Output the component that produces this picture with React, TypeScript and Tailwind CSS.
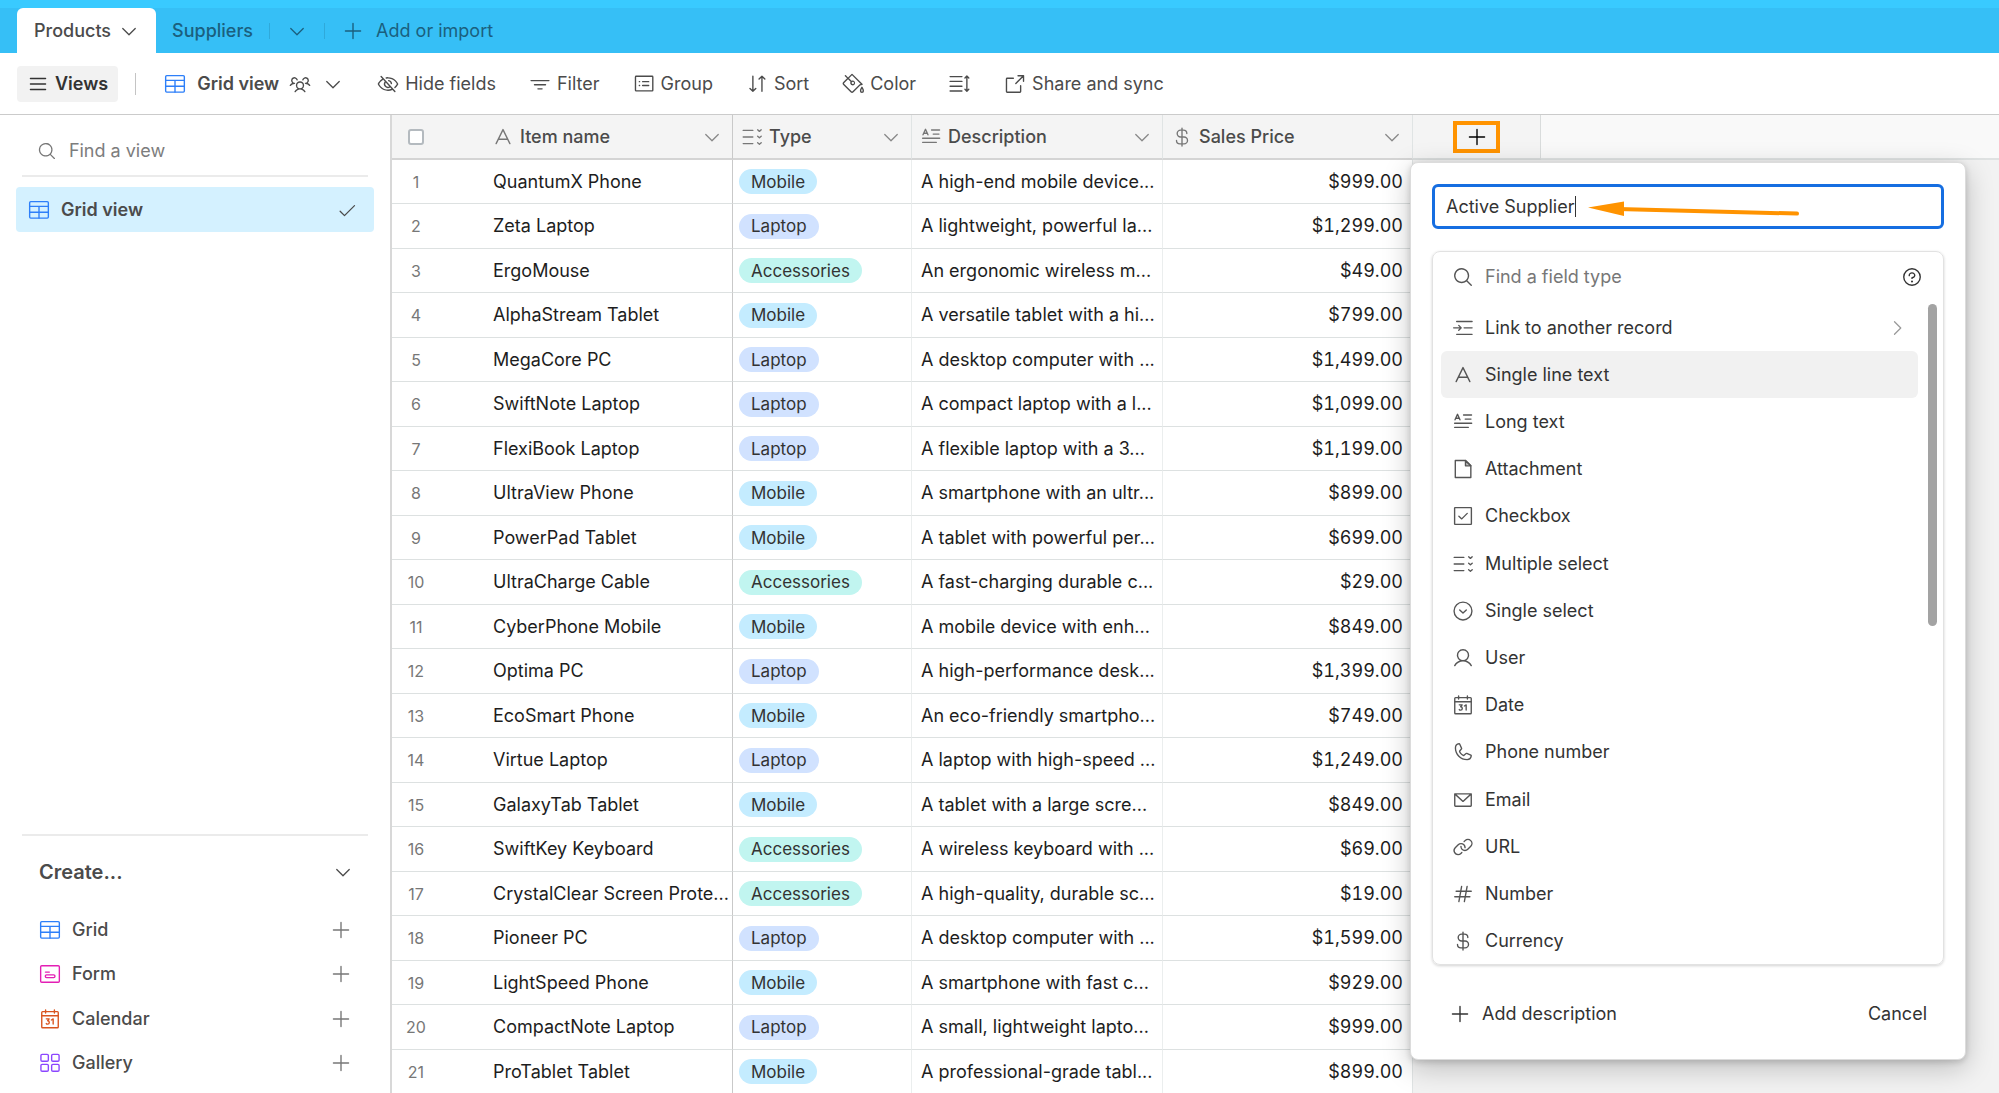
import React, { useState } from "react";
import {
  PiCaretDown,
  PiCaretRight,
  PiCheck,
  PiCurrencyDollar,
  PiEnvelopeSimple,
  PiEyeSlash,
  PiFunnelSimple,
  PiHash,
  PiLink,
  PiList,
  PiMagnifyingGlass,
  PiPaintBucket,
  PiPhone,
  PiPlus,
  PiQuestion,
  PiUser,
  PiUsersThree,
} from "react-icons/pi";

interface iconProps {
  className?: string;
}

interface svgProps extends iconProps {
  children: React.ReactNode;
}

// every hand drawn icon sits on a 16 unit grid
const Svg = ({ className = "", children }: svgProps) => (
  <svg
    viewBox="0 0 16 16"
    className={`size-[22px] shrink-0 ${className}`}
    fill="none"
    stroke="currentColor"
    strokeWidth="1"
    strokeLinecap="round"
    strokeLinejoin="round"
    aria-hidden="true"
  >
    {children}
  </svg>
);

const GridIcon = ({ className }: iconProps) => (
  <Svg className={className}>
    <rect x="1.2" y="1.9" width="13.6" height="12" rx="0.8" />
    <path d="M1.2 5.4h13.6M1.2 9.6h13.6M8 5.4v8.5" />
  </Svg>
);

const FormIcon = ({ className }: iconProps) => (
  <Svg className={className}>
    <rect x="1.2" y="2" width="13.6" height="12" rx="0.8" />
    <path d="M4.7 6.6h2.8" />
    <rect x="4.6" y="8.6" width="7" height="2" rx="0.9" />
  </Svg>
);

const CalendarIcon = ({ className }: iconProps) => (
  <Svg className={className}>
    <rect x="2" y="2.6" width="12" height="11.8" rx="0.6" />
    <path d="M2 5.6h12M4.8 1.4v2.2M11.2 1.4v2.2" />
    <path d="M5.3 7.9h2.1L6.3 9.3c1.8.2 1.4 2.5-.1 2.4-.4 0-.7-.1-.9-.4M9 8.7l1.3-.8v3.8" />
  </Svg>
);

const GalleryIcon = ({ className }: iconProps) => (
  <Svg className={className}>
    <rect x="1.4" y="1.7" width="5.4" height="5" rx="0.9" />
    <rect x="9.2" y="1.7" width="5.4" height="5" rx="0.9" />
    <rect x="1.4" y="9" width="5.4" height="5" rx="0.9" />
    <rect x="9.2" y="9" width="5.4" height="5" rx="0.9" />
  </Svg>
);

const GroupIcon = ({ className }: iconProps) => (
  <Svg className={className}>
    <rect x="1.8" y="2.4" width="12.6" height="10.6" rx="0.5" />
    <path d="M4.6 6.3h.2M4.6 9.1h.2M7 6.3h4.4M7 9.1h4.4" />
  </Svg>
);

const SortIcon = ({ className }: iconProps) => (
  <Svg className={className}>
    <path d="M5 2.3v11M2.9 11.2L5 13.3l2.1-2.1M11.6 13.3v-11M9.5 4.4l2.1-2.1 2.1 2.1" />
  </Svg>
);

const RowHeightIcon = ({ className }: iconProps) => (
  <Svg className={className}>
    <path d="M.8 2.6h8.6M.8 6.1h8.6M.8 9.6h8.6M.8 13.1h8.6M13 2.2v11M11.6 3.6L13 2.2l1.4 1.4M11.6 11.8l1.4 1.4 1.4-1.4" />
  </Svg>
);

const ShareIcon = ({ className }: iconProps) => (
  <Svg className={className}>
    <path d="M6.8 3.8H2.3a.5.5 0 0 0-.5.5v9.2c0 .3.2.5.5.5h9.3c.3 0 .5-.2.5-.5V9.2M10.2 2h4v4M14.2 2L8.6 7.6" />
  </Svg>
);

const TextIcon = ({ className }: iconProps) => (
  <Svg className={className}>
    <path d="M3 12.8L8 2.6l5 10.2M4.7 9.6h6.6" />
  </Svg>
);

const LongTextIcon = ({ className }: iconProps) => (
  <Svg className={className}>
    <path d="M2.2 6.4l1.8-4 1.8 4M2.8 5.3h2.4M8.4 2.9h5.8M9.6 5.9h4.2M1.9 8.9h12.4M1.9 11.9h10" />
  </Svg>
);

const MultiSelectIcon = ({ className }: iconProps) => (
  <Svg className={className}>
    <path d="M1.6 3.2h7M1.6 8h7M1.6 12.8h7M12.1 2.8l1.3 1.1 1.3-1.1M12.1 7.5l1.3 1.1 1.3-1.1M12.1 12.2l1.3 1.1 1.3-1.1" />
  </Svg>
);

const LinkRecordIcon = ({ className }: iconProps) => (
  <Svg className={className}>
    <path d="M3.4 3.3h11.2M8.8 7.9h5.8M3.4 12.6h11.2M1.2 7.9h5.4M4.9 6.1l1.8 1.8-1.8 1.8" />
  </Svg>
);

const FileIcon = ({ className }: iconProps) => (
  <Svg className={className}>
    <path d="M2.4 1.8h7.4l3.9 3.9v8.5H2.4z" />
    <path d="M9.8 1.8v3.9h3.9z" fill="currentColor" fillOpacity="0.4" />
  </Svg>
);

const CheckboxIcon = ({ className }: iconProps) => (
  <Svg className={className}>
    <rect x="1.9" y="1.9" width="12.2" height="12.2" rx="0.3" />
    <path d="M5 8.2l2.1 1.9 4-4" />
  </Svg>
);

const SingleSelectIcon = ({ className }: iconProps) => (
  <Svg className={className}>
    <circle cx="8" cy="8" r="6.5" />
    <path d="M5.6 7.2L8 9.5l2.4-2.3" />
  </Svg>
);

const rows: [string, string, string, string][] = [
  ["QuantumX Phone", "Mobile", "A high-end mobile device...", "$999.00"],
  ["Zeta Laptop", "Laptop", "A lightweight, powerful la...", "$1,299.00"],
  ["ErgoMouse", "Accessories", "An ergonomic wireless m...", "$49.00"],
  ["AlphaStream Tablet", "Mobile", "A versatile tablet with a hi...", "$799.00"],
  ["MegaCore PC", "Laptop", "A desktop computer with ...", "$1,499.00"],
  ["SwiftNote Laptop", "Laptop", "A compact laptop with a l...", "$1,099.00"],
  ["FlexiBook Laptop", "Laptop", "A flexible laptop with a 3...", "$1,199.00"],
  ["UltraView Phone", "Mobile", "A smartphone with an ultr...", "$899.00"],
  ["PowerPad Tablet", "Mobile", "A tablet with powerful per...", "$699.00"],
  ["UltraCharge Cable", "Accessories", "A fast-charging durable c...", "$29.00"],
  ["CyberPhone Mobile", "Mobile", "A mobile device with enh...", "$849.00"],
  ["Optima PC", "Laptop", "A high-performance desk...", "$1,399.00"],
  ["EcoSmart Phone", "Mobile", "An eco-friendly smartpho...", "$749.00"],
  ["Virtue Laptop", "Laptop", "A laptop with high-speed ...", "$1,249.00"],
  ["GalaxyTab Tablet", "Mobile", "A tablet with a large scre...", "$849.00"],
  ["SwiftKey Keyboard", "Accessories", "A wireless keyboard with ...", "$69.00"],
  ["CrystalClear Screen Prote...", "Accessories", "A high-quality, durable sc...", "$19.00"],
  ["Pioneer PC", "Laptop", "A desktop computer with ...", "$1,599.00"],
  ["LightSpeed Phone", "Mobile", "A smartphone with fast c...", "$929.00"],
  ["CompactNote Laptop", "Laptop", "A small, lightweight lapto...", "$999.00"],
  ["ProTablet Tablet", "Mobile", "A professional-grade tabl...", "$899.00"],
];

const tagColors: Record<string, string> = {
  Mobile: "bg-[#c4ecff]",
  Laptop: "bg-[#d1e2ff]",
  Accessories: "bg-[#c1f5f0]",
};

const columns = [
  { label: "Item name", Icon: TextIcon, className: "w-[293px] pl-[52px] border-[#c9c9c9]" },
  { label: "Type", Icon: MultiSelectIcon, className: "w-[179px] pl-2 border-[#e0e4e4]" },
  { label: "Description", Icon: LongTextIcon, className: "w-[251px] pl-2 border-[#e0e4e4]" },
  { label: "Sales Price", Icon: PiCurrencyDollar, className: "w-[250px] pl-2 border-[#e0e4e4]" },
];

const fieldTypes = [
  { label: "Link to another record", Icon: LinkRecordIcon },
  { label: "Single line text", Icon: TextIcon },
  { label: "Long text", Icon: LongTextIcon },
  { label: "Attachment", Icon: FileIcon },
  { label: "Checkbox", Icon: CheckboxIcon },
  { label: "Multiple select", Icon: MultiSelectIcon },
  { label: "Single select", Icon: SingleSelectIcon },
  { label: "User", Icon: PiUser },
  { label: "Date", Icon: CalendarIcon },
  { label: "Phone number", Icon: PiPhone },
  { label: "Email", Icon: PiEnvelopeSimple },
  { label: "URL", Icon: PiLink },
  { label: "Number", Icon: PiHash },
  { label: "Currency", Icon: PiCurrencyDollar },
];

const createItems = [
  { label: "Grid", Icon: GridIcon, color: "text-[#2d7ff9]" },
  { label: "Form", Icon: FormIcon, color: "text-[#e31fb4]" },
  { label: "Calendar", Icon: CalendarIcon, color: "text-[#d9541e]" },
  { label: "Gallery", Icon: GalleryIcon, color: "text-[#8b46ff]" },
];

const toolbarItems = [
  { label: "Hide fields", Icon: PiEyeSlash },
  { label: "Filter", Icon: PiFunnelSimple },
  { label: "Group", Icon: GroupIcon },
  { label: "Sort", Icon: SortIcon },
  { label: "Color", Icon: PiPaintBucket },
  { label: "", Icon: RowHeightIcon },
  { label: "Share and sync", Icon: ShareIcon },
];

const TopTabs = () => (
  <nav className="flex h-[53px] shrink-0 items-end border-t-8 border-[#39caff] bg-[#36bff6] pl-[17px] text-[#1b5f7e]">
    <button
      type="button"
      className="flex h-[45px] items-center gap-2 rounded-t-md bg-white px-[17px] font-medium text-[#4b4b4b]"
    >
      Products
      <PiCaretDown className="size-5" />
    </button>
    <div className="flex h-[45px] items-center">
      <button type="button" className="px-4 font-medium">
        Suppliers
      </button>
      <span className="h-4 w-px bg-[#2fa9da]" />
      <button type="button" aria-label="All tables" className="px-[17px]">
        <PiCaretDown className="size-5" />
      </button>
      <span className="h-4 w-px bg-[#2fa9da]" />
      <button type="button" className="flex items-center gap-3 px-[17px]">
        <PiPlus className="size-[22px]" />
        Add or import
      </button>
    </div>
  </nav>
);

const Toolbar = () => (
  <div className="flex h-[62px] shrink-0 items-center border-b border-[#cbcbcb] bg-white px-[17px] text-[#4b4b4b]">
    <button
      type="button"
      className="flex h-9 items-center gap-1.5 rounded bg-[#f2f2f2] px-2.5 font-semibold text-[#333]"
    >
      <PiList className="size-[22px]" />
      Views
    </button>
    <span className="ml-[17px] h-[22px] w-px bg-[#c4c4c4]" />
    <button type="button" className="ml-7 flex items-center font-semibold">
      <GridIcon className="text-[#2d7ff9]" />
      <span className="ml-[11px]">Grid view</span>
      <PiUsersThree className="ml-2.5 size-[22px]" />
      <PiCaretDown className="ml-3 size-5" />
    </button>
    <div className="ml-[34px] flex items-center gap-[33px]">
      {toolbarItems.map(({ label, Icon }) => (
        <button
          key={label || "Row height"}
          type="button"
          aria-label={label || "Row height"}
          className="flex items-center gap-1.5"
        >
          <Icon className="size-[22px]" />
          {label}
        </button>
      ))}
    </div>
  </div>
);

const Sidebar = () => (
  <aside className="flex w-[392px] shrink-0 flex-col border-r-2 border-[#d8d8d8] bg-white text-[#4b4b4b]">
    <label className="mx-[22px] flex h-[62px] items-center gap-3 border-b-2 border-[#ebebeb] pt-3 pl-[15px]">
      <PiMagnifyingGlass className="size-[22px] text-[#777]" />
      <input
        type="text"
        aria-label="Find a view"
        placeholder="Find a view"
        className="w-full outline-none placeholder:text-[#7d7d7d]"
      />
    </label>
    <button
      type="button"
      className="mx-4 mt-2.5 flex h-[45px] items-center gap-[11px] rounded bg-[#d4f1ff] pr-[17px] pl-3 font-semibold"
    >
      <GridIcon className="text-[#2d7ff9]" />
      Grid view
      <PiCheck className="ml-auto size-5" />
    </button>

    <div className="mx-[22px] mt-auto border-t-2 border-[#ebebeb] pb-2">
      <button
        type="button"
        className="flex h-[71px] w-full items-center justify-between pr-[15px] pl-[17px] text-xl font-semibold"
      >
        Create...
        <PiCaretDown className="size-5" />
      </button>
      {createItems.map(({ label, Icon, color }) => (
        <button
          key={label}
          type="button"
          className="flex h-11 w-full items-center gap-[11px] pr-4 pl-[17px] font-medium even:h-[45px]"
        >
          <Icon className={color} />
          {label}
          <PiPlus className="ml-auto size-[22px] text-[#777]" />
        </button>
      ))}
    </div>
  </aside>
);

const FieldPopover = () => {
  const [fieldName, setFieldName] = useState("Active Supplier");
  const [selected, setSelected] = useState("Single line text");

  return (
    <div className="absolute top-[47px] -left-[3px] z-10 w-[556px] rounded-lg border border-[#dcdcdc] bg-white px-[21px] pt-[21px] pb-5 text-left font-normal text-[#333] shadow-[0_8px_28px_rgba(0,0,0,0.22),0_2px_6px_rgba(0,0,0,0.16)]">
      <div className="flex h-[45px] items-center rounded-md border-3 border-[#166ee1] bg-white pl-[11px]">
        <input
          type="text"
          aria-label="Field name"
          value={fieldName}
          onChange={(e) => setFieldName(e.target.value)}
          className="field-sizing-content caret-transparent outline-none"
        />
        <span className="h-[21px] w-px bg-[#333]" />
        {/* hint arrow */}
        <svg viewBox="0 0 212 16" className="mt-1 ml-3 h-4 w-[212px]" aria-hidden="true">
          <path d="M30 8L209 12.6" stroke="#ff9300" strokeWidth="4" strokeLinecap="round" />
          <path d="M0 6.5L36 0.5V15z" fill="#ff9300" />
        </svg>
      </div>

      <div className="mt-[22px] rounded-lg border border-[#e2e2e2] pl-2 shadow-[0_1px_3px_rgba(0,0,0,0.18)]">
        <div className="flex h-[52px] items-center gap-[11px] pr-5 pb-0.5 pl-[11px]">
          <PiMagnifyingGlass className="size-[22px] text-[#555]" />
          <input
            type="text"
            aria-label="Find a field type"
            placeholder="Find a field type"
            className="flex-1 outline-none placeholder:text-[#777]"
          />
          <button type="button" aria-label="Help">
            <PiQuestion className="size-[22px]" />
          </button>
        </div>
        <div className="flex">
          <ul className="flex-1">
            {fieldTypes.map(({ label, Icon }, index) => (
              <li key={label} className="h-[47px] nth-[5n]:h-12">
                <button
                  type="button"
                  onClick={() => setSelected(label)}
                  className={`flex h-full w-full items-center gap-[11px] rounded-md px-[11px] ${
                    selected === label ? "bg-[#f1f1f1]" : ""
                  }`}
                >
                  <Icon className="size-[22px] text-[#555]" />
                  {label}
                  {index === 0 && <PiCaretRight className="ml-auto size-5 text-[#999]" />}
                </button>
              </li>
            ))}
          </ul>
          <span className="mr-1.5 ml-2.5 h-[322px] w-[9px] rounded-full bg-[#a3a3a3]" />
        </div>
      </div>

      <div className="mt-6 flex h-[50px] items-center justify-between px-[17px]">
        <button type="button" className="flex items-center gap-[11px]">
          <PiPlus className="size-[22px]" />
          Add description
        </button>
        <button type="button">Cancel</button>
      </div>
    </div>
  );
};

const DataGrid = () => (
  <main className="min-w-0 flex-1 bg-[#f2f2f2]">
    <table className="w-full table-fixed border-separate border-spacing-0 whitespace-nowrap">
      <thead>
        <tr className="h-[45px] text-left text-[#4b4b4b]">
          <th className="w-12 border-b-2 border-[#d4d4d4] bg-[#f4f4f4] text-center">
            <input
              type="checkbox"
              aria-label="Select all rows"
              className="mx-auto block size-4 appearance-none rounded-[3px] border-2 border-[#b4babf] bg-white"
            />
          </th>
          {columns.map(({ label, Icon, className }) => (
            <th
              key={label}
              className={`border-r border-b-2 border-b-[#d4d4d4] bg-[#f4f4f4] pr-2.5 font-medium ${className}`}
            >
              <div className="flex items-center gap-1.5">
                <Icon className="size-[22px] text-[#777]" />
                {label}
                <button type="button" aria-label={`${label} menu`} className="ml-auto">
                  <PiCaretDown className="size-5 text-[#888]" />
                </button>
              </div>
            </th>
          ))}
          <th className="relative w-32 border-r border-b-2 border-[#d9dcdc] bg-[#f4f4f4]">
            <button
              type="button"
              aria-label="Add field"
              className="mx-auto flex h-8 w-[47px] items-center justify-center border-4 border-[#ff9300] text-black"
            >
              <PiPlus className="size-[22px]" />
            </button>
            <FieldPopover />
          </th>
          <th className="border-b-2 border-[#dfe2e2] bg-[#f9f9f9]" />
        </tr>
      </thead>
      <tbody>
        {rows.map(([name, type, description, price], index) => (
          <tr
            key={name}
            className="h-11 text-[#1d1d1d] even:h-[45px] *:border-b *:border-b-[#dde1e1] *:bg-white"
          >
            <td className="text-center text-base text-[#777]">{index + 1}</td>
            <td className="border-r border-r-[#c9c9c9] pl-[53px]">{name}</td>
            <td className="border-r border-r-[#ebeeee] pl-1.5">
              <span
                className={`flex h-[25px] w-fit items-center rounded-full px-3 text-[17px] text-[#333] ${tagColors[type]}`}
              >
                {type}
              </span>
            </td>
            <td className="border-r border-r-[#ebeeee] pl-[9px]">{description}</td>
            <td className="border-r border-r-[#e0e4e4] pr-[9px] text-right tabular-nums">{price}</td>
          </tr>
        ))}
      </tbody>
    </table>
  </main>
);

const App = () => {
  return (
    <div className="flex h-screen flex-col overflow-hidden bg-white font-['Inter','Liberation_Sans',sans-serif] text-lg leading-6">
      <TopTabs />
      <Toolbar />
      <div className="flex min-h-0 flex-1">
        <Sidebar />
        <DataGrid />
      </div>
    </div>
  );
};

export default App;
